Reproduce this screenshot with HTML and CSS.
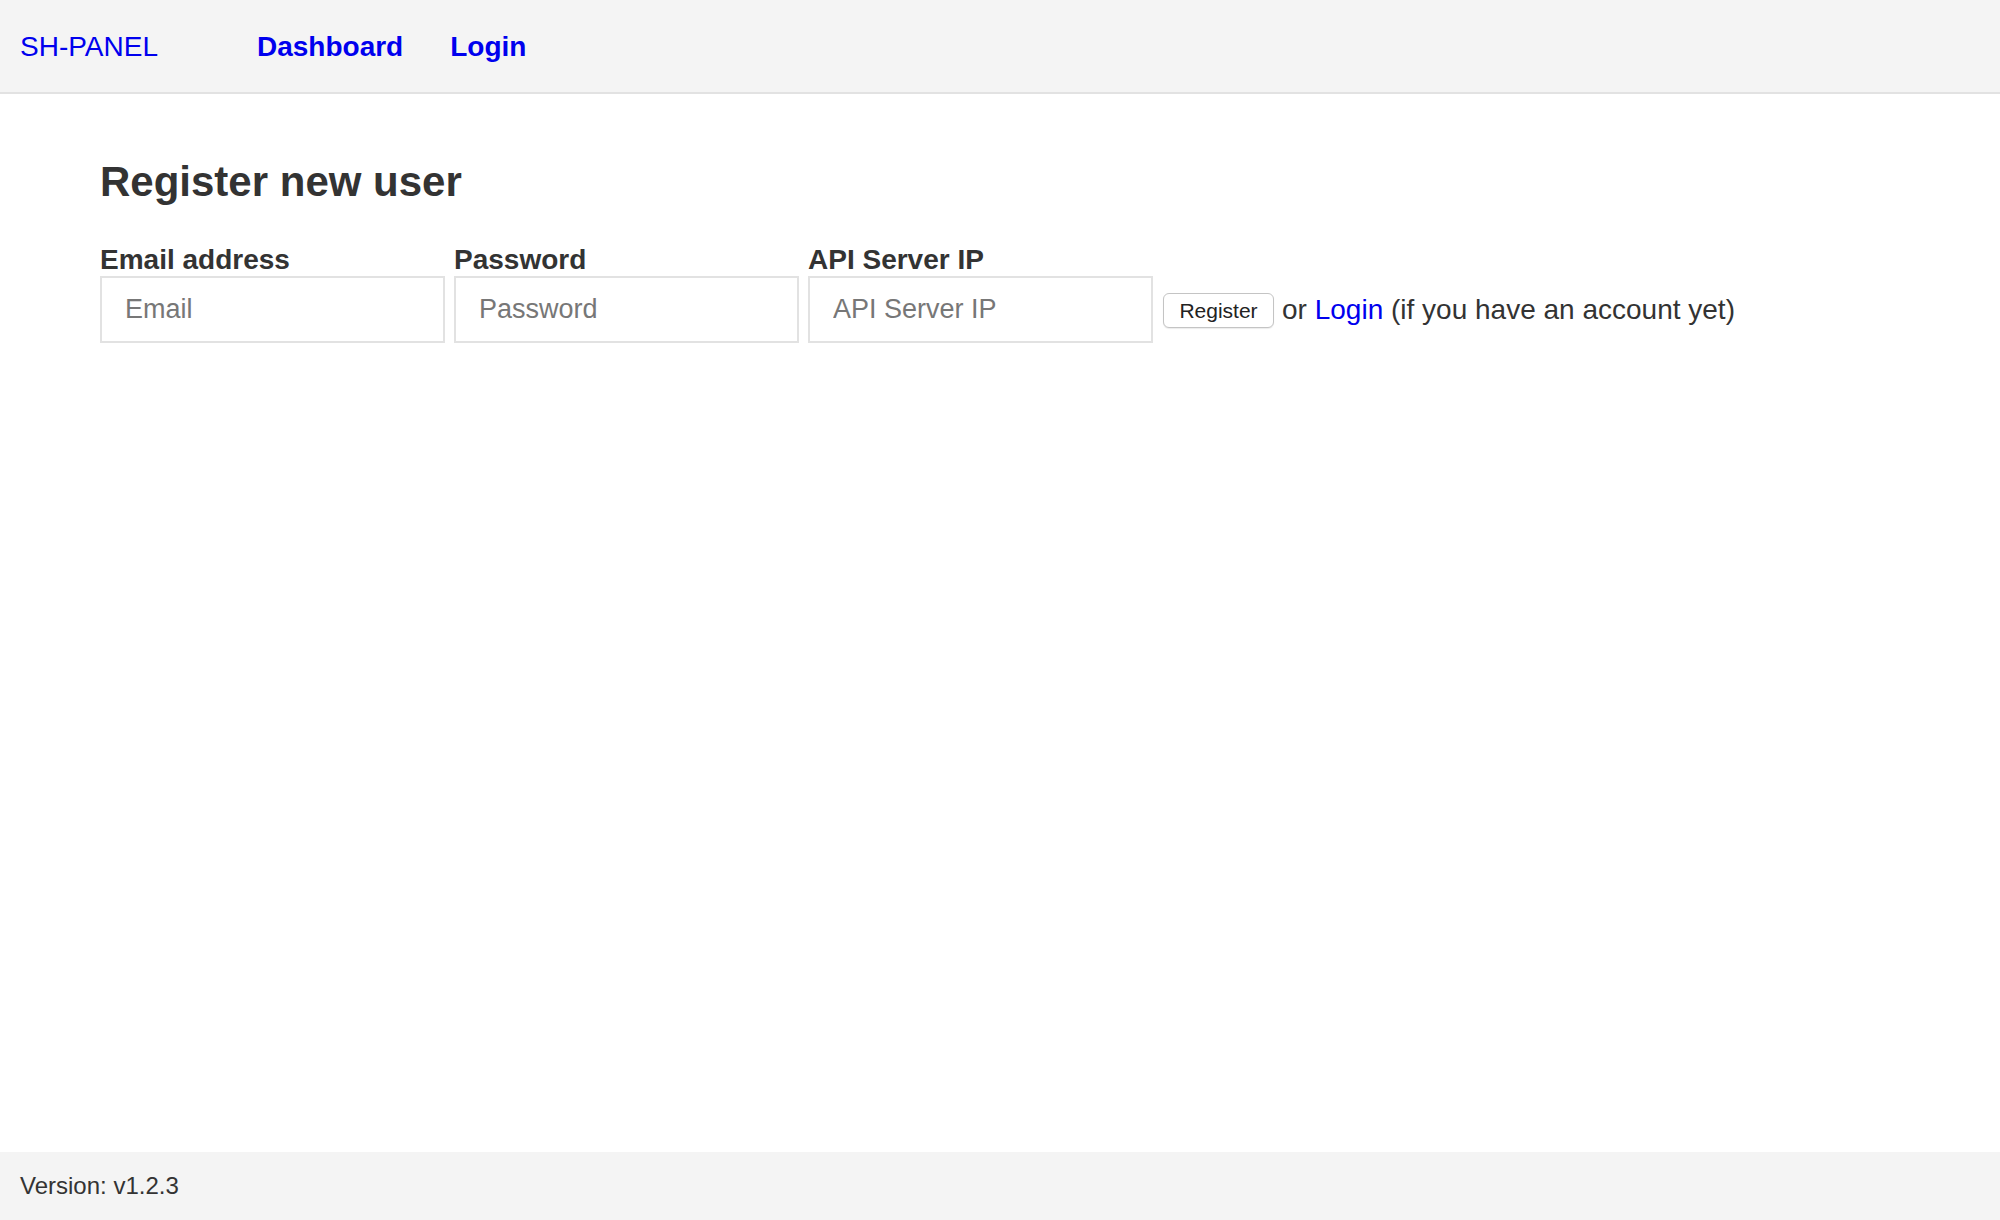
FILE: index.html
```html
<!DOCTYPE html>
<html lang="en">
<head>
<meta charset="utf-8">
<title>SH-PANEL</title>
<link rel="stylesheet" href="styles.css">
</head>
<body>
<div class="page">
  <header class="topbar">
    <a class="brand" href="#">SH-PANEL</a>
    <nav class="nav">
      <a class="nav-link" href="#">Dashboard</a>
      <a class="nav-link" href="#">Login</a>
    </nav>
  </header>
  <main class="main">
    <h2 class="title">Register new user</h2>
    <form class="form">
      <div class="field">
        <label class="label">Email address</label>
        <input class="input" type="text" placeholder="Email">
      </div>
      <div class="field">
        <label class="label">Password</label>
        <input class="input" type="password" placeholder="Password">
      </div>
      <div class="field">
        <label class="label">API Server IP</label>
        <input class="input" type="text" placeholder="API Server IP">
      </div>
      <div class="actions">
        <button class="btn" type="button">Register</button>
        <span class="hint">or <a class="link" href="#">Login</a> (if you have an account yet)</span>
      </div>
    </form>
  </main>
  <footer class="footer">Version: v1.2.3</footer>
</div>
</body>
</html>
```
FILE: styles.css
```css
html, body {
  margin: 0;
  padding: 0;
}
body {
  font-family: "Liberation Sans", Arial, Helvetica, sans-serif;
  font-size: 28px;
  color: #333;
  background: #fff;
}
.page {
  min-height: 100vh;
  display: flex;
  flex-direction: column;
}
.topbar {
  height: 94px;
  box-sizing: border-box;
  background: #f4f4f4;
  border-bottom: 2px solid #e2e2e2;
  display: flex;
  align-items: center;
  padding-left: 20px;
  padding-top: 1px;
}
.brand {
  color: #0000ee;
  text-decoration: none;
  margin-right: 99px;
}
.nav {
  display: flex;
  gap: 47px;
}
.nav-link {
  color: #0000ee;
  font-weight: bold;
  text-decoration: none;
}
.main {
  flex: 1;
  padding: 29px 100px;
}
.title {
  font-size: 42px;
  font-weight: bold;
  margin: 35px 0 38px;
  color: #333;
}
.form {
  display: flex;
  align-items: flex-end;
  gap: 9px;
}
.field {
  display: flex;
  flex-direction: column;
}
.label {
  font-weight: bold;
  color: #333;
}
.input {
  width: 345px;
  height: 67px;
  box-sizing: border-box;
  border: 2px solid #e2e2e2;
  padding: 0 23px;
  font-family: "Liberation Sans", Arial, Helvetica, sans-serif;
  font-size: 27px;
  color: #333;
  background: #fff;
  outline: none;
}
.input::placeholder {
  color: #777;
}
.actions {
  height: 67px;
  display: flex;
  align-items: center;
  margin-left: 1px;
}
.btn {
  width: 111px;
  height: 35px;
  box-sizing: border-box;
  font-family: "Liberation Sans", Arial, Helvetica, sans-serif;
  font-size: 21px;
  color: #222;
  background: #fff;
  border: 1px solid #c4c4c4;
  border-radius: 6px;
  box-shadow: 0 1px 1px rgba(0,0,0,0.08);
  padding: 0;
  margin-right: 8px;
  margin-top: 2px;
}
.hint {
  white-space: nowrap;
}
.link {
  color: #0000ee;
  text-decoration: none;
}
.footer {
  height: 68px;
  background: #f4f4f4;
  display: flex;
  align-items: center;
  padding-left: 20px;
  font-size: 24px;
  color: #333;
}
```
